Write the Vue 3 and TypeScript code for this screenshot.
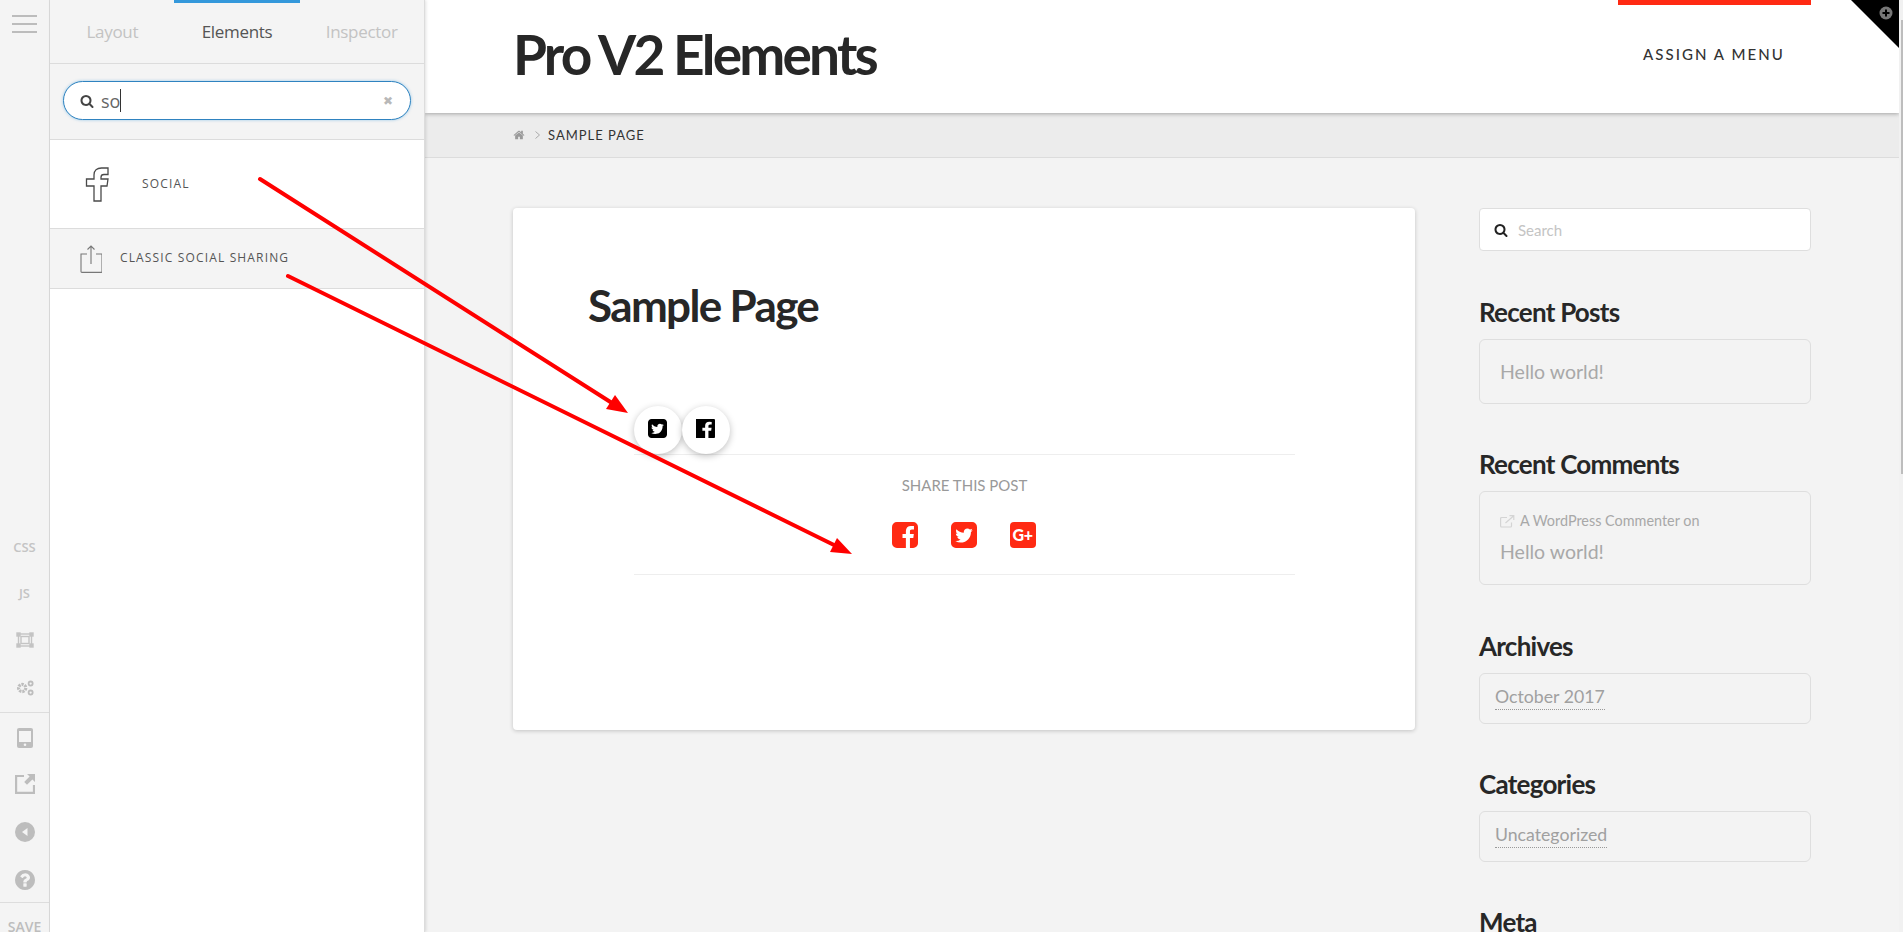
<script setup lang="ts">
const twitter = 'M1280 610q-56 25-121 34 68-40 93-117-65 38-134 51-61-66-153-66-87 0-148.5 61.5t-61.5 148.5q0 29 5 48-129-7-242-65t-192-155q-29 50-29 106 0 114 91 175-47-1-100-26v2q0 75 50 133.5t123 72.5q-29 8-51 8-13 0-39-4 21 63 74.5 104t121.5 42q-116 90-261 90-26 0-50-3 148 94 322 94 112 0 210-35.5t168-95 120.5-137 75-162 24.5-168.5q0-18-1-27 63-45 105-109zm256-194v960q0 119-84.5 203.5t-203.5 84.5h-960q-119 0-203.5-84.5t-84.5-203.5v-960q0-119 84.5-203.5t203.5-84.5h960q119 0 203.5 84.5t84.5 203.5z'
const fbSquare = 'M1248 128q119 0 203.5 84.5t84.5 203.5v960q0 119-84.5 203.5t-203.5 84.5h-188v-595h199l30-232h-229v-148q0-56 23.5-84t91.5-28l122-1v-207q-63-9-178-9-136 0-217.5 80t-81.5 226v171h-200v232h200v595h-532q-119 0-203.5-84.5t-84.5-203.5v-960q0-119 84.5-203.5t203.5-84.5h960z'
const fbOfficial = 'M1379 128q35 0 60 25t25 60v1366q0 35-25 60t-60 25h-391v-595h199l30-232h-229v-148q0-56 23.5-84t91.5-28l122-1v-207q-63-9-178-9-136 0-217.5 80t-81.5 226v171h-200v232h200v595h-735q-35 0-60-25t-25-60v-1366q0-35 25-60t60-25h1366z'
const search = 'M1216 832q0-185-131.5-316.5t-316.5-131.5-316.5 131.5-131.5 316.5 131.5 316.5 316.5 131.5 316.5-131.5 131.5-316.5zm512 832q0 52-38 90t-90 38q-54 0-90-38l-343-342q-179 124-399 124-143 0-273.5-55.5t-225-150-150-225-55.5-273.5 55.5-273.5 150-225 225-150 273.5-55.5 273.5 55.5 225 150 150 225 55.5 273.5q0 220-124 399l343 343q37 37 37 90z'
const home = 'M1472 992v480q0 26-19 45t-45 19h-384v-384h-256v384h-384q-26 0-45-19t-19-45v-480q0-1 .5-3t.5-3l575-474 575 474q1 2 1 6zm223-69l-62 74q-8 9-21 11h-3q-13 0-21-7l-692-577-692 577q-12 8-24 7-13-2-21-11l-62-74q-8-10-7-23.5t11-21.5l719-599q32-26 76-26t76 26l244 204v-195q0-14 9-23t23-9h192q14 0 23 9t9 23v408l219 182q10 8 11 21.5t-7 23.5z'
const help = 'M1024 1376v-192q0-14-9-23t-23-9h-192q-14 0-23 9t-9 23v192q0 14 9 23t23 9h192q14 0 23-9t9-23zm256-672q0-88-55.5-163t-138.5-116-170-41q-243 0-371 213-15 24 8 42l132 100q7 6 19 6 16 0 25-12 53-68 86-92 34-24 86-24 48 0 85.5 26t37.5 59q0 38-20 61t-68 45q-63 28-115.5 86.5t-52.5 125.5v36q0 14 9 23t23 9h192q14 0 23-9t9-23q0-19 21.5-49.5t54.5-49.5q32-18 49-28.5t46-35 44.5-48 28-60.5 12.5-81zm384 192q0 209-103 385.5t-279.5 279.5-385.5 103-385.5-103-279.5-279.5-103-385.5 103-385.5 279.5-279.5 385.5-103 385.5 103 279.5 279.5 103 385.5z'
const widgets = [
  { title: 'Archives', link: 'October 2017' },
  { title: 'Categories', link: 'Uncategorized' },
]
</script>

<template>
  <div class="app">
    <aside class="rail">
      <div class="burger"><i></i><i></i><i></i></div>
      <div class="rail-tools">
        <span class="rail-text">CSS</span>
        <span class="rail-text">JS</span>
        <svg class="rail-ic" viewBox="0 0 18 16" fill="none" stroke="#c4c4c4" stroke-width="1.4"><rect x="2.5" y="2" width="13" height="12"/><rect x="5" y="4.5" width="8" height="7"/><rect x="1" y="1" width="3" height="3" fill="#c4c4c4"/><rect x="14" y="1" width="3" height="3" fill="#c4c4c4"/><rect x="1" y="12" width="3" height="3" fill="#c4c4c4"/><rect x="14" y="12" width="3" height="3" fill="#c4c4c4"/></svg>
        <svg class="rail-ic" viewBox="0 0 16 14"><g fill="none" stroke="#bdbdbd"><circle cx="5.500" cy="7" r="3.200" stroke-width="2.800" stroke-dasharray="2 .8"/><circle cx="13" cy="3" r="1.800" stroke-width="1.600"/><circle cx="13" cy="11" r="1.800" stroke-width="1.600"/></g></svg>
      </div>
      <div class="rail-actions">
        <svg class="phone" viewBox="0 0 16 20"><path fill="#bdbdbd" fill-rule="evenodd" d="M2 0h12a2 2 0 0 1 2 2v16a2 2 0 0 1-2 2H2a2 2 0 0 1-2-2V2a2 2 0 0 1 2-2zM2 3v11h12V3zM8 15.500a1.300 1.300 0 1 0 0 2.600a1.300 1.300 0 0 0 0-2.600z"/></svg>
        <svg class="external" viewBox="0 0 20 20"><path fill="none" stroke="#bdbdbd" stroke-width="2.200" d="M9 2H1.100v16.900H19V11"/><path fill="#bdbdbd" d="M12 0h8v8l-2.600-2.600-5.400 5.400-2.800-2.800 5.400-5.400z"/></svg>
        <svg class="round" viewBox="0 0 20 20"><circle cx="10" cy="10" r="10" fill="#bdbdbd"/><path fill="#f4f4f4" d="M12.500 6v8L7 10z"/></svg>
        <svg class="round" viewBox="128 128 1536 1536"><path fill="#bdbdbd" :d="help"/></svg>
      </div>
      <div class="save">SAVE</div>
    </aside>

    <section class="panel">
      <nav class="tabs">
        <span class="tab">Layout</span>
        <span class="tab active">Elements</span>
        <span class="tab">Inspector</span>
      </nav>
      <div class="search-wrap">
        <div class="pill">
          <svg class="pill-search" viewBox="0 0 1792 1792"><path fill="#444" :d="search"/></svg>
          <span class="typed">so</span><span class="caret"></span>
          <span class="clear">✖</span>
        </div>
      </div>
      <div class="el el-social">
        <svg class="f-ic" viewBox="0 0 24 35" fill="none" stroke="#4a4a4a" stroke-width="1.300"><path d="M9 34V19H1.500v-7H9V8c0-4.500 3-7 7.500-7H23v6.500h-4c-2 0-3 .8-3 2.800V12h7l-1 7h-6v15z"/></svg>
        <span class="el-label">SOCIAL</span>
      </div>
      <div class="el el-classic">
        <svg class="share-ic" viewBox="0 0 22 28" fill="none" stroke="#777" stroke-width="1.100"><path d="M7 9H1v17.500q0 .9 .9 .9h19.200q.9 0 .9-.9V9h-6"/><path d="M11 19V1M7.500 4.500L11 1l3.500 3.500"/></svg>
        <span class="el-label">CLASSIC SOCIAL SHARING</span>
      </div>
    </section>

    <main class="site">
      <header class="head">
        <h1 class="brand">Pro V2 Elements</h1>
        <div class="menu"><span class="menu-bar"></span>ASSIGN A MENU</div>
        <div class="corner">
          <svg class="corner-plus" viewBox="0 0 14 14"><circle cx="7" cy="7" r="6.500" fill="#777"/><path d="M3.500 7h7M7 3.500v7" stroke="#000" stroke-width="2"/></svg>
        </div>
      </header>
      <div class="crumbs">
        <svg class="home" viewBox="0 0 1792 1792"><path fill="#9a9a9a" :d="home"/></svg>
        <svg class="sep" viewBox="0 0 5 8" fill="none" stroke="#aaa" stroke-width="1"><path d="M.5 .5L4.500 4L.5 7.500"/></svg>
        <span>SAMPLE PAGE</span>
      </div>
      <div class="columns">
        <article class="card">
          <h2 class="page-title">Sample Page</h2>
          <div class="share-block">
            <div class="float-row">
              <span class="float-btn"><svg viewBox="0 128 1536 1536"><path fill="#000" :d="twitter"/></svg></span>
              <span class="float-btn"><svg viewBox="85 128 1380 1536" preserveAspectRatio="none"><path fill="#000" :d="fbOfficial"/></svg></span>
            </div>
            <div class="share-box">
              <div class="share-title">SHARE THIS POST</div>
              <div class="share-icons">
                <svg viewBox="0 128 1536 1536"><path fill="#ff2a13" :d="fbSquare"/></svg>
                <svg viewBox="0 128 1536 1536"><path fill="#ff2a13" :d="twitter"/></svg>
                <span class="gplus">G+</span>
              </div>
            </div>
          </div>
        </article>

        <aside class="side">
          <div class="side-search">
            <svg viewBox="0 0 1792 1792"><path fill="#222" :d="search"/></svg>
            <span>Search</span>
          </div>
          <h3 class="w-title">Recent Posts</h3>
          <div class="w-box w-posts"><span class="w-link">Hello world!</span></div>
          <h3 class="w-title">Recent Comments</h3>
          <div class="w-box w-comments">
            <div class="comment-line">
              <svg viewBox="0 0 15 13" fill="none" stroke="#d4d4d4" stroke-width="1.200"><path d="M11.500 7.500v3.500a1 1 0 0 1-1 1H1.600a1 1 0 0 1-1-1V3.500a1 1 0 0 1 1-1H7"/><path d="M5.500 8L13.500 1M9.500 .7h4.300v4.300"/></svg>
              <span>A WordPress Commenter on</span>
            </div>
            <span class="w-link">Hello world!</span>
          </div>
          <template v-for="w in widgets" :key="w.title">
            <h3 class="w-title">{{ w.title }}</h3>
            <div class="w-box w-single"><span class="dotted">{{ w.link }}</span></div>
          </template>
          <h3 class="w-title">Meta</h3>
        </aside>
      </div>
    </main>

    <div class="scroll"><span class="thumb"></span></div>

    <svg class="arrows" width="1903" height="932" viewBox="0 0 1903 932">
      <line x1="260" y1="179" x2="612" y2="403" stroke="#ff0000" stroke-width="4" stroke-linecap="round"/>
      <path d="M628 413L606 409L615 395Z" fill="#ff0000"/>
      <line x1="288" y1="276" x2="836" y2="546" stroke="#ff0000" stroke-width="4" stroke-linecap="round"/>
      <path d="M852 554L830 552L837 538Z" fill="#ff0000"/>
    </svg>
  </div>
</template>

<style>
html, body { margin: 0; overflow: hidden; background: #f3f3f3; }
</style>

<style scoped>
.app { position: relative; display: flex; width: 1903px; height: 932px; overflow: hidden; font-family: Lato, sans-serif; background: #f3f3f3; }

.rail { flex: 0 0 50px; box-sizing: border-box; height: 932px; background: #f4f4f4; border-right: 1px solid #dcdcdc; font-family: "Open Sans", sans-serif; display: flex; flex-direction: column; overflow: hidden; }
.burger { display: flex; flex-direction: column; gap: 6px; padding: 15px 12px 0; }
.burger i { display: block; height: 2px; background: #bcbcbc; }
.rail-tools { flex: none; margin-top: 491px; height: 189px; box-sizing: border-box; display: flex; flex-direction: column; align-items: center; border-bottom: 1px solid #dddddd; }
.rail-text { font-size: 13px; font-weight: 600; color: #c4c4c4; line-height: 46px; height: 46px; }
.rail-ic { flex: none; width: 18px; height: 16px; margin: 16px 0; }
.rail-actions { flex: none; height: 190px; box-sizing: border-box; display: flex; flex-direction: column; align-items: center; border-bottom: 1px solid #dddddd; }
.phone { flex: none; width: 16px; height: 20px; margin-top: 15px; }
.external { flex: none; width: 20px; height: 20px; margin-top: 26px; }
.round { flex: none; width: 20px; height: 20px; margin-top: 28px; }
.save { flex: none; text-align: center; font-size: 14px; font-weight: 600; color: #bdbdbd; padding-top: 15px; line-height: 18px; }

.panel { flex: 0 0 374px; height: 932px; background: #fff; border-right: 1px solid #dcdcdc; box-shadow: 1px 0 3px rgba(0,0,0,.12); font-family: "Open Sans", sans-serif; z-index: 2; }
.tabs { display: flex; height: 63px; background: #f4f4f4; border-bottom: 1px solid #dcdcdc; }
.tab { position: relative; flex: 1; text-align: center; font-size: 17px; line-height: 63px; color: #c3c3c3; letter-spacing: -.3px; }
.tab.active { color: #555; }
.tab.active::before { content: ""; position: absolute; left: -1px; right: -1px; top: 0; height: 3px; background: #3498db; }
.search-wrap { height: 76px; box-sizing: border-box; background: #f4f4f4; border-bottom: 1px solid #dcdcdc; padding: 17px 13px 0; }
.pill { display: flex; align-items: center; height: 39px; box-sizing: border-box; background: #fff; border: 1px solid #2f83c0; border-radius: 20px; box-shadow: 0 0 3px rgba(52,152,219,.5); padding: 0 17px 0 16px; }
.pill-search { width: 14px; height: 14px; }
.typed { font-size: 18px; color: #666; margin-left: 7px; line-height: 24px; }
.caret { width: 1px; height: 23px; background: #333; }
.clear { margin-left: auto; font-size: 12px; color: #b8b8b8; }
.el { display: flex; align-items: center; box-sizing: border-box; border-bottom: 1px solid #dcdcdc; }
.el-social { height: 89px; background: #fff; padding-left: 35px; }
.el-classic { height: 60px; background: #f4f4f4; padding-left: 30px; }
.f-ic { width: 24px; height: 35px; margin-right: 33px; }
.share-ic { width: 22px; height: 28px; margin-right: 18px; }
.el-label { font-size: 12px; font-weight: 500; letter-spacing: 1.150px; color: #555; padding-bottom: 2px; }

.site { flex: 1; min-width: 0; }
.head { position: relative; height: 113px; box-sizing: border-box; margin-right: 4px; background: #fff; box-shadow: 0 1px 4px rgba(0,0,0,.3); display: flex; align-items: center; justify-content: space-between; padding: 0 88px 0 88px; z-index: 1; }
.brand { margin: 0 0 5px; font-size: 55px; font-weight: 700; letter-spacing: -2.800px; color: #272727; line-height: 1; }
.menu { position: relative; box-sizing: border-box; width: 193px; padding: 0 0 6px 25px; font-size: 15px; font-weight: 500; letter-spacing: 2.050px; color: #333; align-self: stretch; display: flex; align-items: center; white-space: nowrap; }
.menu-bar { position: absolute; top: 0; right: 0; width: 193px; height: 5px; background: #ff2a13; }
.corner { position: absolute; top: 0; right: 0; width: 48px; height: 48px; background: #000; clip-path: polygon(0 0, 100% 0, 100% 100%); }
.corner-plus { position: absolute; top: 6px; right: 6px; width: 14px; height: 14px; }
.crumbs { display: flex; align-items: center; height: 45px; box-sizing: border-box; background: #ececec; border-bottom: 1px solid #dcdcdc; padding-left: 88px; font-size: 13px; letter-spacing: 1px; color: #333; }
.home { width: 12px; height: 12px; margin-right: 10px; }
.sep { width: 5px; height: 8px; margin-right: 8px; }
.columns { display: flex; align-items: flex-start; padding: 50px 92px 0 88px; gap: 64px; }
.card { flex: 0 0 902px; height: 522px; box-sizing: border-box; background: #fff; border-radius: 4px; box-shadow: 0 1px 4px rgba(0,0,0,.2); padding: 73px 0 0 75px; }
.page-title { margin: 0; font-size: 44px; font-weight: 700; letter-spacing: -1.650px; color: #272727; line-height: 48px; }
.share-block { margin: 77px 0 0 46px; width: 661px; }
.float-row { display: flex; height: 48px; }
.float-btn { width: 48px; height: 48px; border-radius: 50%; background: #fff; box-shadow: 0 2px 7px rgba(0,0,0,.25); display: flex; align-items: center; justify-content: center; }
.float-btn svg { width: 19px; height: 19px; margin: -3px 2px 0 0; }
.share-box { border-top: 1px solid #eeeeee; border-bottom: 1px solid #eeeeee; height: 121px; box-sizing: border-box; text-align: center; padding-top: 20px; }
.share-title { font-size: 15px; color: #999; line-height: 20px; }
.share-icons { display: flex; justify-content: center; gap: 33px; margin: 27px 2px 0 0; }
.share-icons svg { width: 26px; height: 26px; }
.gplus { width: 26px; height: 26px; border-radius: 4px; background: #ff2a13; color: #fff; font-size: 16px; font-weight: 900; line-height: 26px; text-align: center; letter-spacing: -.5px; }

.side { flex: 0 0 332px; }
.side-search { height: 43px; box-sizing: border-box; display: flex; align-items: center; background: #fff; border: 1px solid #dedede; border-radius: 4px; padding-left: 14px; font-size: 15px; color: #c4c4c4; }
.side-search svg { width: 14px; height: 14px; margin-right: 10px; }
.w-title { margin: 0; font-size: 26px; font-weight: 700; letter-spacing: -.75px; color: #272727; line-height: 32px; padding: 45px 0 11px; }
.w-box { box-sizing: border-box; border: 1px solid #dedede; border-radius: 6px; }
.w-posts { height: 65px; margin-bottom: -1px; padding: 19px 20px 0; }
.w-comments { height: 94px; padding: 18px 20px 0; }
.w-single { height: 51px; margin-bottom: -1px; padding: 11px 15px 0; }
.w-link { font-size: 19.500px; color: #a8a8a8; line-height: 26px; }
.comment-line { display: flex; align-items: center; font-size: 14.400px; color: #a8a8a8; line-height: 22px; margin-bottom: 7px; }
.comment-line svg { width: 15px; height: 13px; margin-right: 5px; }
.dotted { font-size: 17.700px; color: #a0a0a0; border-bottom: 1px dotted #999; line-height: 24px; display: inline-block; height: 25px; box-sizing: border-box; }

.scroll { position: absolute; top: 0; right: 0; width: 4px; height: 932px; background: #f1f1f1; z-index: 3; }
.thumb { position: absolute; top: 20px; right: 0; width: 2px; height: 454px; background: #bdbdbd; }
.arrows { position: absolute; inset: 0; z-index: 5; pointer-events: none; }
</style>
